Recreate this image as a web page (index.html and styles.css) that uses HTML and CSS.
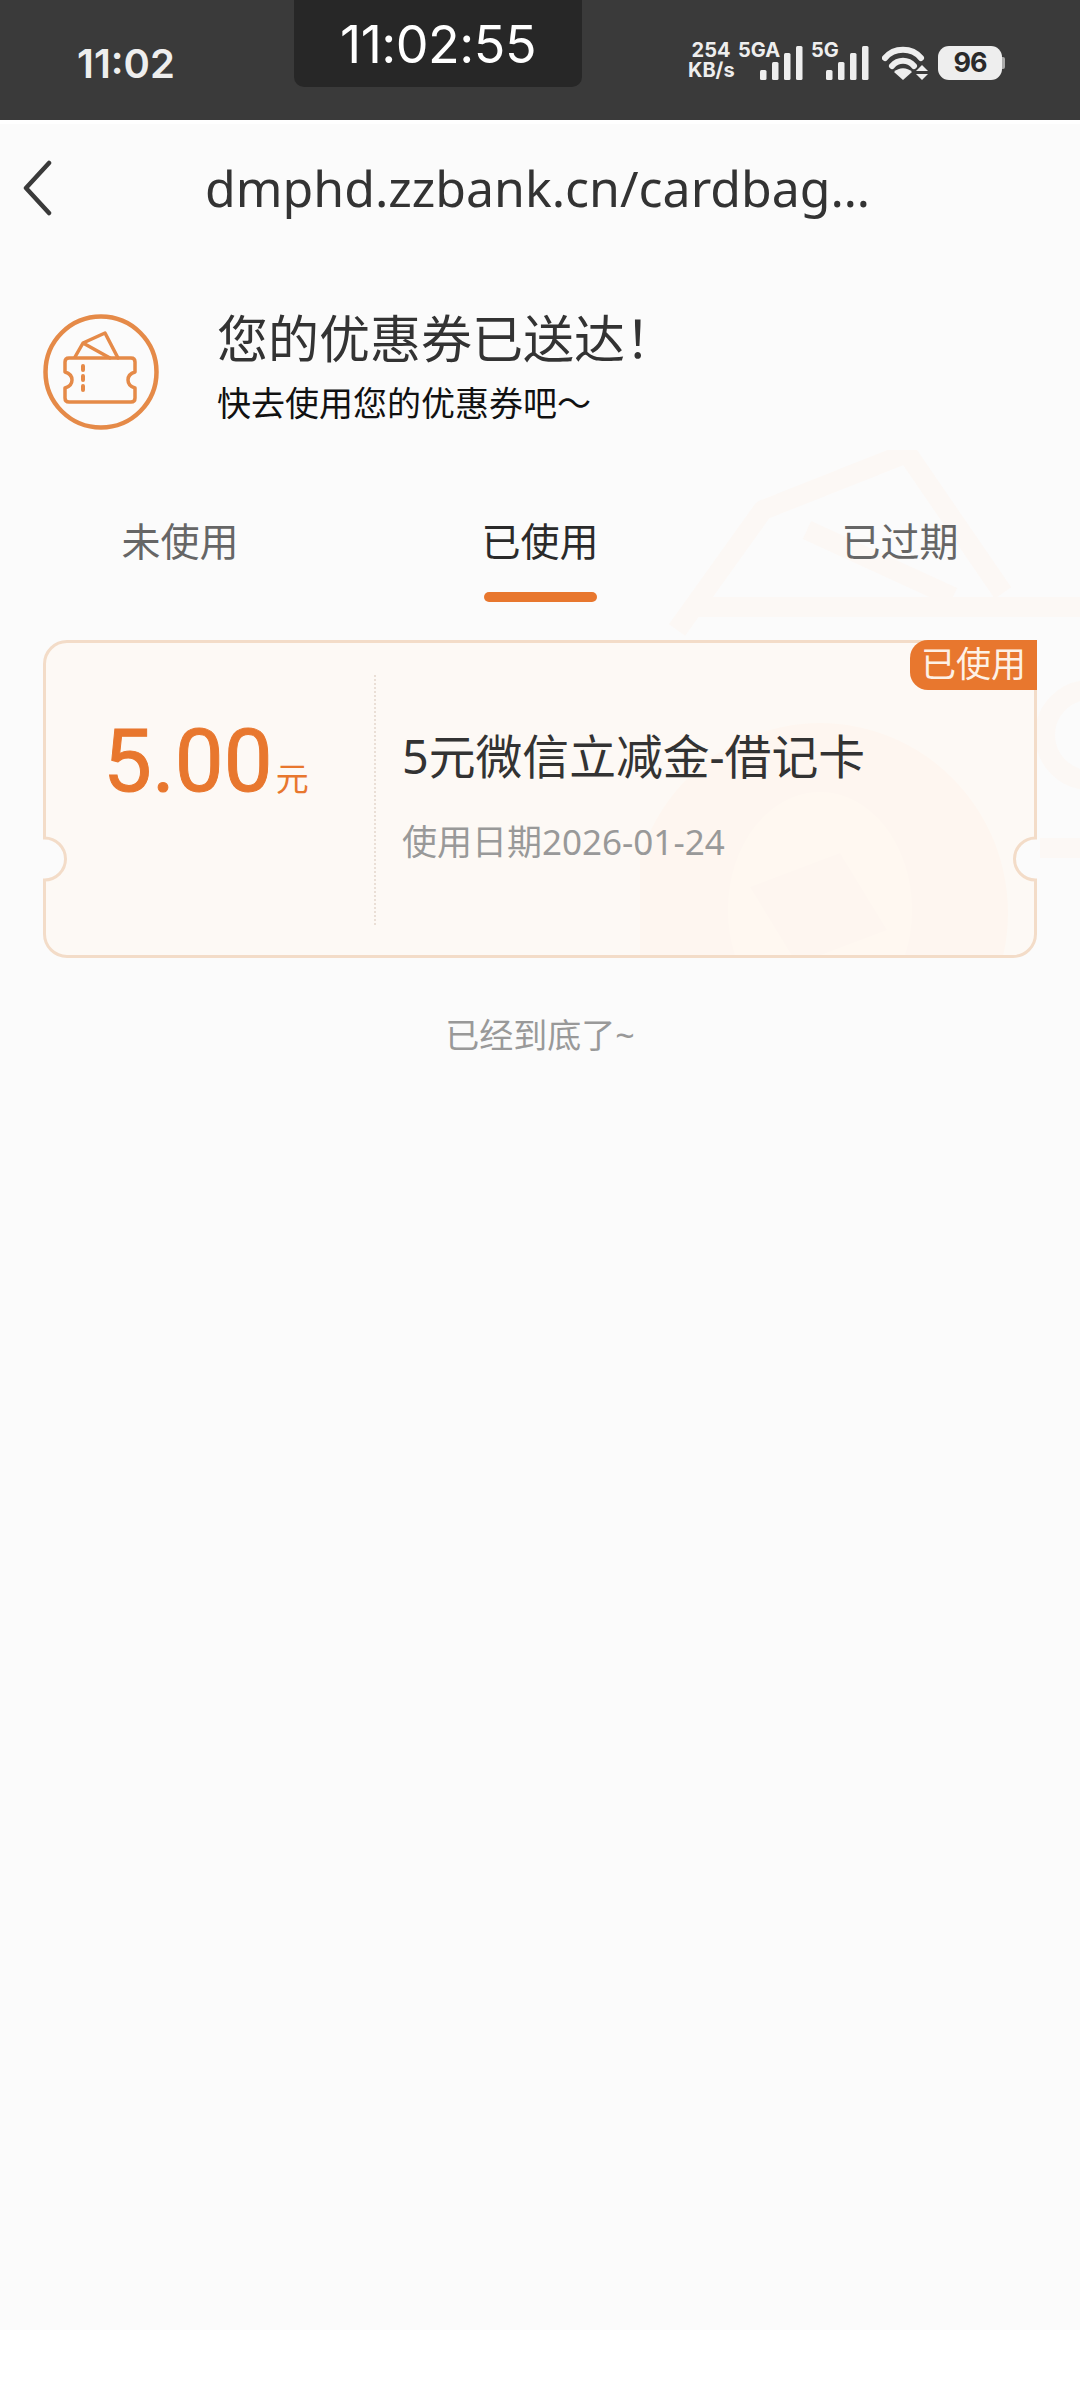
FILE: index.html
```html
<!DOCTYPE html>
<html lang="zh-CN">
<head>
<meta charset="UTF-8">
<meta name="viewport" content="width=device-width, initial-scale=1.0">
<title>优惠券</title>
<link rel="stylesheet" href="styles.css">
</head>
<body>
  <div class="status-bar">
    <span class="clock">11:02</span>
    <span class="timer">11:02:55</span>
    <div class="status-icons">
      <span class="speed">254<br>KB/s</span>
      <span class="net net-a">5GA</span>
      <svg class="signal" width="44" height="34" viewBox="0 0 44 34"><rect x="0" y="24" width="6.500" height="10" rx="1.500"/><rect x="12" y="16" width="6.500" height="18" rx="1.500"/><rect x="24" y="7" width="6.500" height="27" rx="1.500"/><rect x="36" y="0" width="6.500" height="34" rx="1.500"/></svg>
      <span class="net net-b">5G</span>
      <svg class="signal" width="44" height="34" viewBox="0 0 44 34"><rect x="0" y="24" width="6.500" height="10" rx="1.500"/><rect x="12" y="16" width="6.500" height="18" rx="1.500"/><rect x="24" y="7" width="6.500" height="27" rx="1.500"/><rect x="36" y="0" width="6.500" height="34" rx="1.500"/></svg>
      <svg class="wifi" width="46" height="34" viewBox="0 0 46 34"><path d="M3 12C12 1 30 1 39 12" fill="none" stroke="#eee" stroke-width="6" stroke-linecap="round"/><path d="M10 20C16 13 26 13 32 20" fill="none" stroke="#eee" stroke-width="6" stroke-linecap="round"/><path d="M21 34L12 26C17 21 25 21 30 26Z" fill="#eee"/><path d="M40 19L46 25H34Z" fill="#eee"/><path d="M34 28H46L40 34Z" fill="#eee"/></svg>
      <span class="battery">96</span>
    </div>
  </div>

  <div class="nav-bar">
    <svg class="back" width="32" height="56" viewBox="0 0 32 56"><path d="M28 3L5 28L28 53" fill="none" stroke="#3a3a3a" stroke-width="4.500" stroke-linecap="round" stroke-linejoin="round"/></svg>
    <div class="nav-title">dmphd.zzbank.cn/cardbag…</div>
  </div>

  <div class="page">
    <svg class="watermark" width="440" height="508" viewBox="0 0 440 508">
      <g fill="none" stroke="#fcf8f5" stroke-width="20" stroke-linejoin="round">
        <path d="M37 180L123 60L267 3L363 143"/>
        <path d="M167 80L313 147"/>
        <path d="M50 157H440"/>
        <circle cx="450" cy="285" r="45"/>
        <path d="M400 398H440"/>
      </g>
      <ellipse cx="180" cy="463" rx="188" ry="190" fill="#fcf3ed"/>
      <ellipse cx="180" cy="460" rx="92" ry="118" fill="#fff8f1"/>
      <path d="M110 437L200 403L247 480L157 514Z" fill="#fcf3ed"/>
    </svg>

    <div class="welcome">
      <svg class="welcome-icon" width="116" height="116" viewBox="0 0 116 116">
        <g fill="none" stroke="#e58a48" stroke-linejoin="round" stroke-linecap="round">
          <circle cx="58" cy="58" r="55.500" stroke-width="4.500"/>
          <path d="M32 43L40 29L67 44M40 29L62 19L75 44" stroke-width="3.500"/>
          <path d="M26 44H88Q92 44 92 48V58Q85 60 85 66Q85 72 92 74V84Q92 88 88 88H26Q22 88 22 84V74Q29 72 29 66Q29 60 22 58V48Q22 44 26 44Z" stroke-width="3.500"/>
          <path d="M40 52V80" stroke-width="4" stroke-dasharray="4 6"/>
        </g>
      </svg>
      <div class="welcome-text">
        <h1>您的优惠券已送达！</h1>
        <p>快去使用您的优惠券吧～</p>
      </div>
    </div>

    <div class="tabs">
      <div class="tab">未使用</div>
      <div class="tab tab-active">已使用</div>
      <div class="tab">已过期</div>
    </div>

    <div class="coupon">
      <svg class="coupon-shape" width="994" height="318" viewBox="0 0 994 318">
        <path d="M24 1.500H970A22.500 22.500 0 0 1 992.500 24V198A21 21 0 0 0 992.500 240V294A22.500 22.500 0 0 1 970 316.500H24A22.500 22.500 0 0 1 1.500 294V240A21 21 0 0 0 1.500 198V24A22.500 22.500 0 0 1 24 1.500Z" fill="#fff8f1" fill-opacity="0.6" stroke="#f3dcc8" stroke-width="3"/>
      </svg>
      <span class="coupon-badge">已使用</span>
      <div class="coupon-amount">
        <span class="amount-num">5.00</span><span class="amount-unit">元</span>
      </div>
      <div class="coupon-info">
        <div class="coupon-name">5元微信立减金-借记卡</div>
        <div class="coupon-date">使用日期2026-01-24</div>
      </div>
    </div>

    <div class="list-end">已经到底了~</div>
  </div>
</body>
</html>
```

FILE: styles.css
```css
* {
  box-sizing: border-box;
}

html, body {
  margin: 0;
  padding: 0;
}

body {
  width: 1080px;
  height: 2400px;
  background: #fff;
  font-family: "Noto Sans", "Noto Sans CJK SC", sans-serif;
  overflow: hidden;
}

.status-bar {
  height: 120px;
  background: #3a3a3a;
  color: #eee;
  display: flex;
  align-items: flex-start;
  position: relative;
}

.clock {
  width: 217px;
  padding: 39px 0 0 77px;
  font-family: Inter, sans-serif;
  font-weight: 600;
  font-size: 40px;
}

.timer {
  width: 288px;
  height: 87px;
  margin-left: 77px;
  background: #272727;
  border-radius: 0 0 10px 10px;
  color: #fff;
  font-family: Inter, sans-serif;
  font-size: 52px;
  font-weight: 400;
  letter-spacing: -0.5px;
  line-height: 89px;
  text-align: center;
}

.status-icons {
  position: absolute;
  left: 688px;
  top: 40px;
  display: flex;
  align-items: flex-end;
  height: 40px;
}

.speed {
  width: 46px;
  flex: none;
  font-family: Inter, sans-serif;
  font-size: 20px;
  font-weight: 700;
  line-height: 20px;
  text-align: center;
  white-space: nowrap;
}

.net {
  flex: none;
  font-family: Inter, sans-serif;
  font-size: 20px;
  font-weight: 700;
  line-height: 20px;
  margin-bottom: 20px;
}

.net-a {
  width: 42px;
  margin-left: 4px;
  margin-right: -20px;
}

.net-b {
  width: 27px;
  margin-left: 7px;
  margin-right: -12px;
}

.signal {
  fill: #eee;
  flex: none;
}

.wifi {
  margin-left: 12px;
  flex: none;
}

.battery {
  position: relative;
  flex: none;
  width: 64px;
  height: 34px;
  margin-left: 10px;
  border-radius: 11px;
  background: #eee;
  color: #2a2a2a;
  font-family: Inter, sans-serif;
  font-size: 27px;
  font-weight: 700;
  letter-spacing: -1px;
  line-height: 34px;
  text-align: center;
}

.battery::after {
  content: "";
  position: absolute;
  right: -3px;
  top: 11px;
  width: 3px;
  height: 12px;
  border-radius: 0 2px 2px 0;
  background: #aaa;
}

.nav-bar {
  height: 136px;
  padding-bottom: 4px;
  background: #fbfbfb;
  border-top: 4px solid #fff;
  display: flex;
  align-items: center;
}

.back {
  margin-left: 21px;
  flex: none;
}

.nav-title {
  margin-left: 152px;
  font-size: 50px;
  color: #333;
}

.page {
  height: 2074px;
  background: #fbfbfb;
  position: relative;
  overflow: hidden;
  padding: 0 43px;
}

.watermark {
  position: absolute;
  left: 640px;
  top: 194px;
}

.welcome {
  position: relative;
  display: flex;
  align-items: flex-start;
  padding-top: 58px;
}

.welcome-icon {
  flex: none;
}

.welcome-text {
  margin: -9px 0 0 58px;
}

.welcome-text h1 {
  margin: 0 0 8px;
  font-size: 51px;
  font-weight: 400;
  line-height: 66px;
  color: #333;
}

.welcome-text p {
  margin: 0;
  font-size: 34px;
  line-height: 48px;
  color: #111;
}

.tabs {
  position: relative;
  display: flex;
  margin: 81px -43px 0;
}

.tab {
  flex: 1;
  height: 88px;
  font-size: 39px;
  line-height: 60px;
  text-align: center;
  color: #666;
  position: relative;
}

.tab-active {
  color: #2a2a2a;
}

.tab-active::after {
  content: "";
  position: absolute;
  left: 124px;
  bottom: -3px;
  width: 113px;
  height: 10px;
  border-radius: 5px;
  background: #e8772e;
}

.coupon {
  position: relative;
  height: 318px;
  margin-top: 41px;
  display: flex;
  align-items: flex-start;
}

.coupon-shape {
  position: absolute;
  left: 0;
  top: 0;
}

.coupon-badge {
  position: absolute;
  right: 0;
  top: 0;
  width: 127px;
  height: 50px;
  border-radius: 18px 0 0 18px;
  background: #e8772e;
  color: #fdf1e6;
  font-size: 35px;
  line-height: 48px;
  text-align: center;
}

.coupon-amount {
  position: relative;
  width: 333px;
  height: 250px;
  margin-top: 35px;
  padding: 36px 0 0 60px;
  border-right: 2px dotted #eadfd6;
  color: #e8772e;
  white-space: nowrap;
}

.amount-num {
  font-family: Roboto, sans-serif;
  font-size: 87px;
  font-weight: 400;
  -webkit-text-stroke: 1px #e8772e;
  line-height: 100px;
}

.amount-unit {
  font-size: 33px;
  margin-left: 3px;
}

.coupon-info {
  position: relative;
  padding: 83px 0 0 26px;
}

.coupon-name {
  font-size: 46.800px;
  line-height: 66px;
  color: #333;
}

.coupon-date {
  margin-top: 29px;
  font-size: 35px;
  line-height: 48px;
  color: #999;
}

.list-end {
  position: relative;
  margin-top: 53px;
  font-size: 34px;
  line-height: 48px;
  color: #999;
  text-align: center;
}
```
